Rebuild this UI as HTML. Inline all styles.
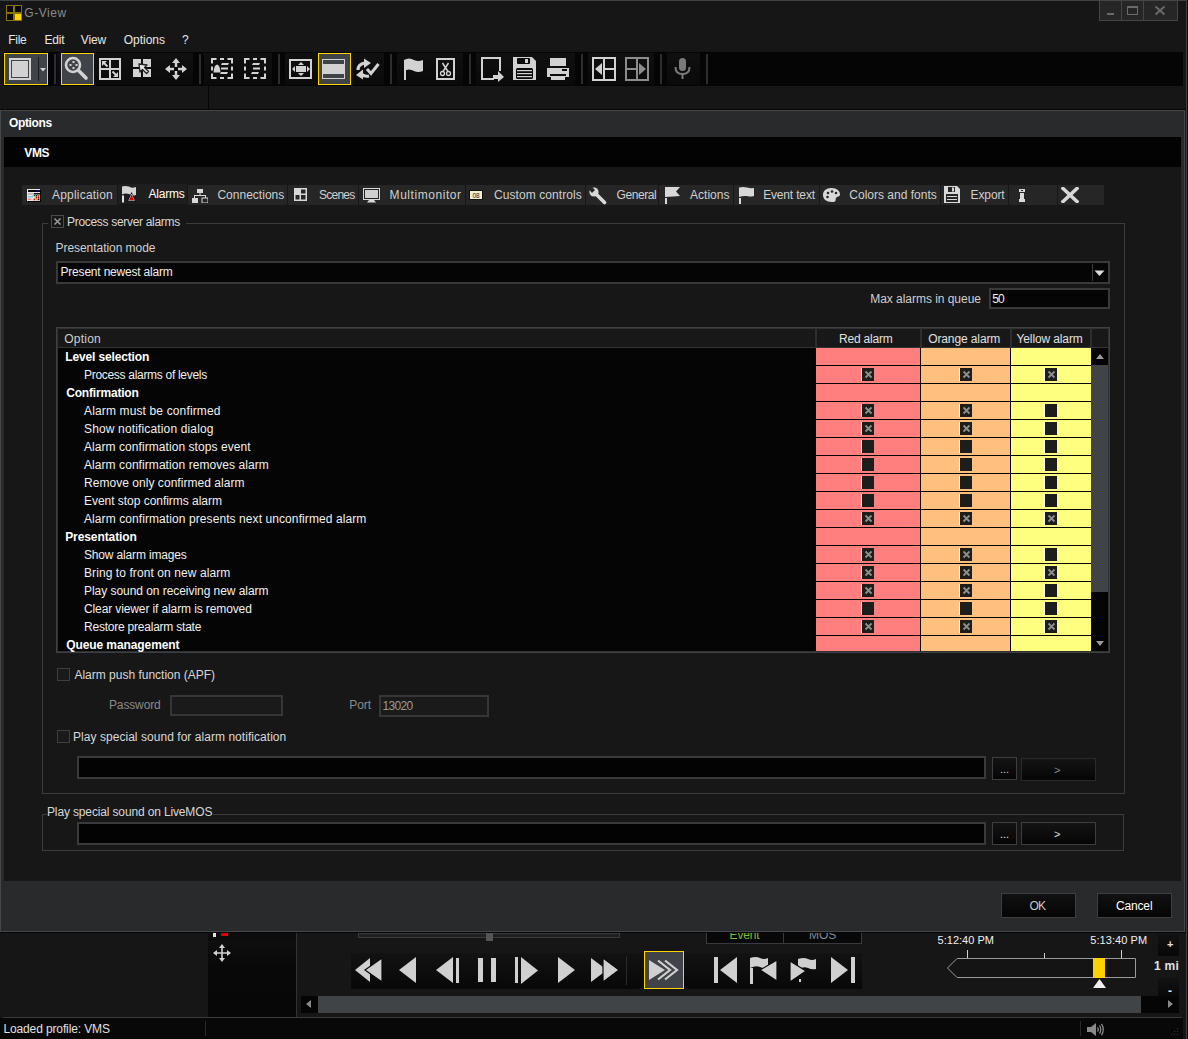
<!DOCTYPE html><html><head><meta charset="utf-8"><style>
html,body{margin:0;padding:0;}
body{width:1188px;height:1039px;background:#161616;position:relative;overflow:hidden;font-family:"Liberation Sans",sans-serif;}
.a{position:absolute;box-sizing:border-box;}
.t{position:absolute;white-space:pre;line-height:14px;font-family:"Liberation Sans",sans-serif;}
</style></head><body>
<div class="a" style="left:0px;top:0px;width:1188px;height:1px;background:#3f4245;"></div>
<div class="a" style="left:1186px;top:0px;width:1px;height:1039px;background:#3a3c3f;"></div>
<div class="a" style="left:1187px;top:0px;width:1px;height:1039px;background:#101010;"></div>
<svg class="a" style="left:6px;top:5px;" width="16" height="16" viewBox="0 0 16 16"><rect x="0" y="0" width="16" height="16" fill="#8a7400"/>
<rect x="1" y="1" width="6" height="6" fill="#050505"/><rect x="9" y="1" width="6" height="6" fill="#050505"/>
<rect x="1" y="9" width="6" height="6" fill="#050505"/><rect x="9" y="9" width="6" height="6" fill="#ffd800"/></svg>
<div id="t0f77378f" class="t" style="left:24.3px;top:6px;font-size:12px;font-weight:400;color:#8a8a8a;letter-spacing:0.560px;">G-View</div>
<div class="a" style="left:1099px;top:0px;width:79px;height:21px;background:#262626;border:1px solid #454545;"></div>
<div class="a" style="left:1121px;top:0px;width:1px;height:21px;background:#454545;"></div>
<div class="a" style="left:1143px;top:0px;width:1px;height:21px;background:#454545;"></div>
<div class="a" style="left:1107px;top:13px;width:7px;height:2px;background:#6a6a6a;"></div>
<div class="a" style="left:1127px;top:6px;width:11px;height:9px;border:1px solid #6a6a6a;border-top-width:2px;"></div>
<svg class="a" style="left:1154px;top:5px;" width="12" height="11" viewBox="0 0 12 11"><path d="M1.5 1.5 L10.5 9.5 M10.5 1.5 L1.5 9.5" stroke="#6a6a6a" stroke-width="2"/></svg>
<div id="t9ccae1ed" class="t" style="left:8.3px;top:33px;font-size:12px;font-weight:400;color:#e6e6e6;letter-spacing:-0.333px;">File</div>
<div id="tb2e7408e" class="t" style="left:44.6px;top:33px;font-size:12px;font-weight:400;color:#e6e6e6;letter-spacing:-0.267px;">Edit</div>
<div id="t12b72c5c" class="t" style="left:80.8px;top:33px;font-size:12px;font-weight:400;color:#e6e6e6;letter-spacing:-0.133px;">View</div>
<div id="tfa9fee2e" class="t" style="left:123.7px;top:33px;font-size:12px;font-weight:400;color:#e6e6e6;letter-spacing:-0.017px;">Options</div>
<div id="td792bb56" class="t" style="left:182px;top:33px;font-size:12px;font-weight:400;color:#e6e6e6;">?</div>
<div class="a" style="left:3px;top:52px;width:1180px;height:34px;background:#050505;"></div>
<div class="a" style="left:4px;top:53px;width:44px;height:32px;background:#404347;border:1px solid #ffd500;"></div>
<div class="a" style="left:9px;top:58px;width:22px;height:22px;border:2px solid #d2d2d2;"></div>
<div class="a" style="left:12px;top:61px;width:16px;height:16px;background:#d2d2d2;"></div>
<div class="a" style="left:38px;top:57px;width:1px;height:24px;background:#1c1e20;"></div>
<svg class="a" style="left:40px;top:68px;" width="6" height="4" viewBox="0 0 6 4"><path d="M0 0 L6 0 L3 3.5 Z" fill="#d2d2d2"/></svg>
<div class="a" style="left:54px;top:54px;width:2px;height:30px;background:#2c2e30;"></div>
<div class="a" style="left:57px;top:53px;width:136px;height:32px;background:linear-gradient(#101010,#0a0a0a);"></div>
<div class="a" style="left:61px;top:53px;width:33px;height:32px;background:#404347;border:1px solid #ffd500;"></div>
<svg class="a" style="left:64px;top:56px;" width="28" height="28" viewBox="0 0 28 28"><circle cx="9" cy="9" r="7" fill="none" stroke="#d2d2d2" stroke-width="2.6"/>
<rect x="8.5" y="5" width="2" height="2" fill="#d2d2d2"/><rect x="8.5" y="11" width="2" height="2" fill="#d2d2d2"/>
<rect x="5.5" y="8" width="2" height="2" fill="#d2d2d2"/><rect x="11.5" y="8" width="2" height="2" fill="#d2d2d2"/>
<path d="M15 15 L22 22" stroke="#d2d2d2" stroke-width="3.6" stroke-linecap="round"/></svg>
<svg class="a" style="left:99px;top:58px;" width="22" height="22" viewBox="0 0 22 22"><rect x="1" y="1" width="20" height="20" fill="none" stroke="#d2d2d2" stroke-width="2"/>
<path d="M11 1 V21 M1 11 H21" stroke="#d2d2d2" stroke-width="2"/>
<path d="M4 4 L8.5 8.5" stroke="#d2d2d2" stroke-width="2"/><path d="M3 3 H8 L3 8 Z" fill="#d2d2d2"/>
<path d="M18 18 L13.5 13.5" stroke="#d2d2d2" stroke-width="2"/><path d="M19 19 H14 L19 14 Z" fill="#d2d2d2"/></svg>
<svg class="a" style="left:133px;top:59px;" width="19" height="19" viewBox="0 0 19 19"><rect x="0" y="0" width="8" height="8" fill="#d2d2d2"/><rect x="10" y="0" width="8" height="8" fill="#d2d2d2"/>
<rect x="0" y="10" width="8" height="8" fill="#d2d2d2"/><rect x="10" y="10" width="8" height="8" fill="#d2d2d2"/>
<path d="M6 5 L14 6 L11.5 8.5 L15.5 12.5 L13.5 14.5 L9.5 10.5 L7 13 Z" fill="#e8e8e8" stroke="#222" stroke-width="1.3" stroke-linejoin="round"/></svg>
<svg class="a" style="left:165px;top:58px;" width="22" height="22" viewBox="0 0 22 22"><path d="M11 2 V20 M2 11 H20" stroke="#d2d2d2" stroke-width="2.5"/>
<path d="M11 0 L15 5 H7 Z M11 22 L15 17 H7 Z M0 11 L5 7 V15 Z M22 11 L17 7 V15 Z" fill="#d2d2d2"/>
<rect x="9" y="9" width="4" height="4" fill="#0a0a0a"/></svg>
<div class="a" style="left:199px;top:54px;width:2px;height:30px;background:#2c2e30;"></div>
<div class="a" style="left:204px;top:53px;width:68px;height:32px;background:linear-gradient(#101010,#0a0a0a);"></div>
<svg class="a" style="left:211px;top:58px;" width="22" height="21" viewBox="0 0 22 21"><path d="M1 5.5 V1 H5.5 M16.5 1 H21 V5.5 M21 15.5 V20 H16.5 M5.5 20 H1 V15.5" fill="none" stroke="#d2d2d2" stroke-width="2"/>
<path d="M9 1 H13 M9 20 H13 M1 8.5 V12.5 M21 8.5 V12.5" stroke="#d2d2d2" stroke-width="2"/></svg>
<svg class="a" style="left:211px;top:58px;" width="22" height="21" viewBox="0 0 22 21"><path d="M2.5 14.5 Q3 7 6 6.5 Q9 7 9.5 14.5 Z" fill="#d2d2d2"/>
<path d="M11 5 H18 L17 7 H10 Z M10 9.5 H17 V11.5 H10 Z M10 14 H17 L16 16 H9 Z" fill="#d2d2d2"/></svg>
<svg class="a" style="left:244px;top:58px;" width="22" height="21" viewBox="0 0 22 21"><path d="M1 5.5 V1 H5.5 M16.5 1 H21 V5.5 M21 15.5 V20 H16.5 M5.5 20 H1 V15.5" fill="none" stroke="#d2d2d2" stroke-width="2"/>
<path d="M9 1 H13 M9 20 H13 M1 8.5 V12.5 M21 8.5 V12.5" stroke="#d2d2d2" stroke-width="2"/></svg>
<svg class="a" style="left:244px;top:58px;" width="22" height="21" viewBox="0 0 22 21"><path d="M9 5 H16 L15 7 H8 Z M9 9.5 H16 V11.5 H9 Z M8 14 H15 L14 16 H7 Z" fill="#d2d2d2"/></svg>
<div class="a" style="left:278px;top:54px;width:2px;height:30px;background:#2c2e30;"></div>
<div class="a" style="left:285px;top:53px;width:99px;height:32px;background:linear-gradient(#101010,#0a0a0a);"></div>
<svg class="a" style="left:289px;top:59px;" width="24" height="20" viewBox="0 0 24 20"><rect x="1" y="1" width="21" height="18" fill="none" stroke="#d2d2d2" stroke-width="2"/>
<rect x="7" y="7" width="10" height="6" fill="#d2d2d2"/>
<path d="M12 3 L15 6 H9 Z M12 17 L15 14 H9 Z M3 10 L6 7 V13 Z M21 10 L18 7 V13 Z" fill="#d2d2d2"/></svg>
<div class="a" style="left:318px;top:53px;width:33px;height:32px;background:#404347;border:1px solid #ffd500;"></div>
<div class="a" style="left:322px;top:59px;width:23px;height:20px;background:#d2d2d2;"></div>
<div class="a" style="left:323px;top:60px;width:21px;height:4px;background:#404347;"></div>
<div class="a" style="left:323px;top:74px;width:21px;height:4px;background:#404347;"></div>
<svg class="a" style="left:354px;top:58px;" width="26" height="22" viewBox="0 0 26 22"><path d="M4 12 Q4 6 11 5" fill="none" stroke="#d2d2d2" stroke-width="3.2"/>
<path d="M10 0.5 L17 5 L10 10 Z" fill="#d2d2d2"/>
<path d="M15 18 Q10 19 7 16" fill="none" stroke="#d2d2d2" stroke-width="3.2"/>
<path d="M9 11.5 L2 17 L9 21.5 Z" fill="#d2d2d2"/>
<path d="M13 11 L17 15.5 L24.5 6" fill="none" stroke="#d2d2d2" stroke-width="3"/></svg>
<div class="a" style="left:390px;top:54px;width:2px;height:30px;background:#2c2e30;"></div>
<div class="a" style="left:397px;top:53px;width:66px;height:32px;background:linear-gradient(#101010,#0a0a0a);"></div>
<svg class="a" style="left:404px;top:58px;" width="19" height="22" viewBox="0 0 19 22"><rect x="0" y="2" width="2" height="20" fill="#d2d2d2"/>
<path d="M0 2 Q5 -1 10 2 Q14 4 19 2 V13 Q14 15 10 13 Q5 10 0 13 Z" fill="#d2d2d2"/></svg>
<svg class="a" style="left:436px;top:58px;" width="19" height="22" viewBox="0 0 19 22"><rect x="1" y="1" width="17" height="20" fill="none" stroke="#d2d2d2" stroke-width="2"/>
<path d="M6.5 5 L12 13.5 M12.5 5 L7 13.5" stroke="#d2d2d2" stroke-width="1.5"/>
<circle cx="6.5" cy="15.5" r="2" fill="none" stroke="#d2d2d2" stroke-width="1.3"/><circle cx="12.5" cy="15.5" r="2" fill="none" stroke="#d2d2d2" stroke-width="1.3"/></svg>
<div class="a" style="left:469px;top:54px;width:2px;height:30px;background:#2c2e30;"></div>
<div class="a" style="left:476px;top:53px;width:99px;height:32px;background:linear-gradient(#101010,#0a0a0a);"></div>
<svg class="a" style="left:481px;top:57px;" width="24" height="25" viewBox="0 0 24 25"><path d="M19 14 V1 H1 V22 H13" fill="none" stroke="#d2d2d2" stroke-width="2"/>
<rect x="12" y="18" width="6" height="4" fill="#d2d2d2"/><path d="M17 14 L23 20 L17 25 Z" fill="#d2d2d2"/></svg>
<svg class="a" style="left:513px;top:57px;" width="23" height="24" viewBox="0 0 23 24"><path d="M0 0 H19 L23 4 V23 H0 Z" fill="#d2d2d2"/>
<rect x="4" y="1" width="13" height="6" rx="1" fill="#0a0a0a"/><rect x="12" y="2" width="3" height="4" fill="#d2d2d2"/>
<rect x="3" y="11" width="17" height="11" rx="1.5" fill="#0a0a0a"/>
<rect x="4" y="13" width="15" height="1.2" fill="#d2d2d2"/><rect x="4" y="16" width="15" height="1.2" fill="#d2d2d2"/><rect x="4" y="19" width="15" height="1.2" fill="#d2d2d2"/></svg>
<svg class="a" style="left:547px;top:57px;" width="23" height="24" viewBox="0 0 23 24"><rect x="3" y="1" width="16" height="8" fill="#d2d2d2"/>
<rect x="0" y="11" width="22" height="9" fill="#d2d2d2"/>
<rect x="15" y="12" width="5" height="2" fill="#0a0a0a"/>
<rect x="3" y="17" width="16" height="2" fill="#0a0a0a"/>
<rect x="4" y="19" width="14" height="4" fill="#d2d2d2"/></svg>
<div class="a" style="left:581px;top:54px;width:2px;height:30px;background:#2c2e30;"></div>
<div class="a" style="left:588px;top:53px;width:66px;height:32px;background:linear-gradient(#101010,#0a0a0a);"></div>
<svg class="a" style="left:592px;top:57px;" width="24" height="24" viewBox="0 0 24 24"><rect x="1" y="1" width="22" height="22" fill="none" stroke="#d2d2d2" stroke-width="2"/>
<path d="M12 1 V23 M12 12 H23" stroke="#d2d2d2" stroke-width="2"/>
<path d="M3 12 L10 6 V18 Z" fill="#d2d2d2"/></svg>
<svg class="a" style="left:625px;top:57px;" width="24" height="24" viewBox="0 0 24 24"><rect x="1" y="1" width="22" height="22" fill="none" stroke="#8c8c8c" stroke-width="2"/>
<path d="M12 1 V23 M1 12 H12" stroke="#8c8c8c" stroke-width="2"/>
<path d="M21 12 L14 6 V18 Z" fill="#8c8c8c"/></svg>
<div class="a" style="left:660px;top:54px;width:2px;height:30px;background:#2c2e30;"></div>
<div class="a" style="left:667px;top:53px;width:33px;height:32px;background:linear-gradient(#101010,#0a0a0a);"></div>
<svg class="a" style="left:674px;top:58px;" width="17" height="21" viewBox="0 0 17 21"><rect x="5" y="0" width="7" height="13" rx="3.5" fill="#7a7a7a"/>
<path d="M1.5 9 Q1.5 16 8.5 16 Q15.5 16 15.5 9" fill="none" stroke="#7a7a7a" stroke-width="2"/>
<rect x="7.5" y="16" width="2" height="5" fill="#7a7a7a"/></svg>
<div class="a" style="left:706px;top:54px;width:2px;height:30px;background:#2c2e30;"></div>
<div class="a" style="left:208px;top:86px;width:1px;height:23px;background:#050505;"></div>
<div class="a" style="left:0px;top:109px;width:1186px;height:1px;background:#060606;"></div>
<div class="a" style="left:208px;top:933px;width:88px;height:84px;background:linear-gradient(#111 0%,#080808 40%,#070707 100%);"></div>
<div class="a" style="left:208px;top:933px;width:88px;height:8px;background:#0c0c0c;"></div>
<div class="a" style="left:213px;top:933px;width:3px;height:4px;background:#e0e0e0;"></div>
<div class="a" style="left:221px;top:933px;width:7px;height:3px;background:#dd0000;"></div>
<svg class="a" style="left:213px;top:944px;" width="18" height="18" viewBox="0 0 18 18"><path d="M9 2 V16 M2 9 H16" stroke="#d0d0d0" stroke-width="1.6"/>
<path d="M9 0 L12 4 H6 Z M9 18 L12 14 H6 Z M0 9 L4 6 V12 Z M18 9 L14 6 V12 Z" fill="#d0d0d0"/></svg>
<div class="a" style="left:296px;top:933px;width:1px;height:84px;background:#333333;"></div>
<div class="a" style="left:358px;top:933px;width:262px;height:5px;border:1px solid #3a3a3a;background:#202020;"></div>
<div class="a" style="left:486px;top:931px;width:7px;height:10px;background:#555555;"></div>
<div class="a" style="left:351px;top:953px;width:511px;height:36px;background:linear-gradient(#121212,#080808);"></div>
<svg class="a" style="left:354px;top:957px;" width="30" height="27" viewBox="0 0 30 27"><path d="M1 13 L16 1 V25 Z" fill="#d0d0d0"/><path d="M11 13 L28 1 V25 Z" fill="#d0d0d0" stroke="#0a0a0a" stroke-width="1.2"/></svg>
<svg class="a" style="left:399px;top:957px;" width="17" height="26" viewBox="0 0 17 26"><path d="M0 13 L17 0 V26 Z" fill="#d0d0d0"/></svg>
<svg class="a" style="left:436px;top:957px;" width="24" height="26" viewBox="0 0 24 26"><path d="M0 13 L17 0 V26 Z" fill="#d0d0d0"/><rect x="20" y="1" width="3" height="25" fill="#d0d0d0"/></svg>
<svg class="a" style="left:478px;top:958px;" width="19" height="24" viewBox="0 0 19 24"><rect x="0" y="0" width="5" height="24" fill="#d0d0d0"/><rect x="13" y="0" width="5" height="24" fill="#d0d0d0"/></svg>
<svg class="a" style="left:515px;top:957px;" width="24" height="27" viewBox="0 0 24 27"><rect x="0" y="0" width="3" height="26" fill="#d0d0d0"/><path d="M23 13.5 L6 0 V27 Z" fill="#d0d0d0"/></svg>
<svg class="a" style="left:558px;top:957px;" width="18" height="26" viewBox="0 0 18 26"><path d="M17 13 L0 0 V26 Z" fill="#d0d0d0"/></svg>
<svg class="a" style="left:590px;top:957px;" width="30" height="27" viewBox="0 0 30 27"><path d="M1 1 V25 L17 13 Z" fill="#d0d0d0"/><path d="M13 1 V25 L29 13 Z" fill="#d0d0d0" stroke="#0a0a0a" stroke-width="1.2"/></svg>
<div class="a" style="left:626px;top:956px;width:1px;height:29px;background:#2a2a2a;"></div>
<div class="a" style="left:644px;top:951px;width:40px;height:38px;background:#404347;border:1px solid #ffd500;"></div>
<svg class="a" style="left:648px;top:959px;" width="33" height="22" viewBox="0 0 33 22"><path d="M1 1 L17 11 L1 21 Z" fill="#d0d0d0"/>
<path d="M10 1.5 L22 11 L10 20.5" fill="none" stroke="#d0d0d0" stroke-width="2.2"/>
<path d="M17 1.5 L29 11 L17 20.5" fill="none" stroke="#d0d0d0" stroke-width="2.2"/></svg>
<div class="a" style="left:706px;top:925px;width:78px;height:19px;background:#080808;border:1px solid #3a3a3a;border-top:none;"></div>
<div class="a" style="left:783px;top:925px;width:79px;height:19px;background:#080808;border:1px solid #3a3a3a;border-top:none;"></div>
<div id="t23795a25" class="t" style="left:729.5px;top:928px;font-size:12px;font-weight:400;color:#7bbd2e;letter-spacing:-0.125px;">Event</div>
<div id="t63a835b7" class="t" style="left:809px;top:928px;font-size:12px;font-weight:400;color:#7f8a99;font-size:12px;">MOS</div>
<svg class="a" style="left:713px;top:957px;" width="25" height="27" viewBox="0 0 25 27"><rect x="1" y="0" width="4" height="26" fill="#d0d0d0"/><path d="M7 13 L24 0 V26 Z" fill="#d0d0d0"/></svg>
<svg class="a" style="left:749px;top:957px;" width="29" height="28" viewBox="0 0 29 28"><rect x="1" y="11" width="3" height="16" fill="#d0d0d0"/><path d="M1 1 Q7 -1 11 1 Q15 3 19 1 V11 Q15 12 11 10 Q7 8 1 11 Z" fill="#d0d0d0"/><path d="M11 13 L28 3 V24 Z" fill="#d0d0d0" stroke="#0a0a0a" stroke-width="1.2"/></svg>
<svg class="a" style="left:789px;top:957px;" width="29" height="28" viewBox="0 0 29 28"><path d="M1 1 Q7 -1 11 1 Q15 3 19 1 V11 Q15 12 11 10 Q7 8 1 11 Z" fill="#d0d0d0" transform="translate(8,1)"/><path d="M1 4 L17 14 L1 25 Z" fill="#d0d0d0" stroke="#0a0a0a" stroke-width="1.2"/><rect x="10" y="22" width="2" height="3" fill="#d0d0d0"/></svg>
<svg class="a" style="left:830px;top:957px;" width="25" height="27" viewBox="0 0 25 27"><path d="M1 0 L18 13 L1 26 Z" fill="#d0d0d0"/><rect x="21" y="0" width="4" height="26" fill="#d0d0d0"/></svg>
<div id="tb10a1912" class="t" style="left:937.6px;top:933px;font-size:12px;font-weight:400;color:#f0f0f0;font-size:11px;letter-spacing:0.012px;">5:12:40 PM</div>
<div id="ta8833228" class="t" style="left:1090.3px;top:933px;font-size:12px;font-weight:400;color:#f0f0f0;font-size:11px;letter-spacing:0.056px;">5:13:40 PM</div>
<div class="a" style="left:967px;top:950px;width:1px;height:8px;background:#d0d0d0;"></div>
<div class="a" style="left:1044px;top:953px;width:1px;height:5px;background:#d0d0d0;"></div>
<div class="a" style="left:1121px;top:950px;width:1px;height:8px;background:#d0d0d0;"></div>
<svg class="a" style="left:946px;top:957px;" width="191" height="22" viewBox="0 0 191 22"><path d="M11 1.5 H189.5 V20.5 H11 L1.5 11 Z" fill="#141414" stroke="#9a9a9a" stroke-width="1"/></svg>
<div class="a" style="left:1093px;top:958px;width:12px;height:20px;background:#ffd200;"></div>
<svg class="a" style="left:1093px;top:979px;" width="13" height="9" viewBox="0 0 13 9"><path d="M0 9 L6.5 0 L13 9 Z" fill="#f0f0f0"/></svg>
<div class="a" style="left:1158px;top:934px;width:21px;height:22px;background:linear-gradient(#121212,#080808);"></div>
<div id="t08a63300" class="t" style="left:1167px;top:937px;font-size:12px;font-weight:400;color:#e0e0e0;font-size:11px;font-weight:700">+</div>
<div class="a" style="left:1150px;top:959px;width:29px;height:16px;overflow:hidden"><div class="t" style="left:4px;top:0px;font-size:12px;font-weight:700;color:#e0e0e0;letter-spacing:0.3px">1 min</div></div>
<div class="a" style="left:1158px;top:978px;width:21px;height:18px;background:linear-gradient(#121212,#080808);"></div>
<div id="tc3e9525c" class="t" style="left:1168px;top:984px;font-size:12px;font-weight:400;color:#e0e0e0;font-weight:700">-</div>
<div class="a" style="left:301px;top:996px;width:878px;height:17px;background:#050505;"></div>
<div class="a" style="left:318px;top:996px;width:823px;height:17px;background:#404447;"></div>
<svg class="a" style="left:306px;top:1000px;" width="5" height="8" viewBox="0 0 5 8"><path d="M5 0 L0 4 L5 8 Z" fill="#8a8a8a"/></svg>
<svg class="a" style="left:1168px;top:1000px;" width="5" height="8" viewBox="0 0 5 8"><path d="M0 0 L5 4 L0 8 Z" fill="#8a8a8a"/></svg>
<div class="a" style="left:3px;top:1017px;width:1179px;height:1px;background:#3a3a3a;"></div>
<div class="a" style="left:0px;top:1018px;width:1183px;height:21px;background:#080808;"></div>
<div id="tf0260ee5" class="t" style="left:3.4000000000000004px;top:1022px;font-size:12px;font-weight:400;color:#e0e0e0;letter-spacing:-0.122px;">Loaded profile: VMS</div>
<div class="a" style="left:205px;top:1021px;width:1px;height:15px;background:#2a2a2a;"></div>
<div class="a" style="left:1080px;top:1021px;width:1px;height:15px;background:#2a2a2a;"></div>
<svg class="a" style="left:1087px;top:1023px;" width="17" height="13" viewBox="0 0 17 13"><path d="M0 4 H4 L9 0 V13 L4 9 H0 Z" fill="#8a8a8a"/>
<path d="M10.5 4.5 Q12 6.5 10.5 8.5 M12.5 2.5 Q15 6.5 12.5 10.5 M14.5 0.8 Q18 6.5 14.5 12.2" fill="none" stroke="#8a8a8a" stroke-width="1.3"/></svg>
<div class="a" style="left:1177px;top:1028px;width:1px;height:1px;background:#3a3a3a;"></div>
<div class="a" style="left:1174px;top:1031px;width:1px;height:1px;background:#3a3a3a;"></div>
<div class="a" style="left:1177px;top:1031px;width:1px;height:1px;background:#3a3a3a;"></div>
<div class="a" style="left:1171px;top:1034px;width:1px;height:1px;background:#3a3a3a;"></div>
<div class="a" style="left:1174px;top:1034px;width:1px;height:1px;background:#3a3a3a;"></div>
<div class="a" style="left:1177px;top:1034px;width:1px;height:1px;background:#3a3a3a;"></div>
<div class="a" style="left:0px;top:110px;width:1185px;height:822px;background:#292a2c;border:1px solid #45484b;"></div>
<div id="t2e519f17" class="t" style="left:9.1px;top:116px;font-size:12px;font-weight:700;color:#ffffff;letter-spacing:-0.384px;">Options</div>
<div class="a" style="left:4px;top:137px;width:1177px;height:30px;background:#030303;"></div>
<div id="t68e1c9e2" class="t" style="left:24.2px;top:146px;font-size:12px;font-weight:700;color:#ffffff;letter-spacing:-0.300px;">VMS</div>
<div class="a" style="left:4px;top:167px;width:1177px;height:714px;background:#171717;"></div>
<div class="a" style="left:0px;top:932px;width:1186px;height:1px;background:#050505;"></div>
<div class="a" style="left:22px;top:185px;width:95px;height:20px;background:#262626;"></div>
<div id="te715fb7c" class="t" style="left:52px;top:188px;font-size:12px;font-weight:400;color:#cfcfcf;letter-spacing:0.200px;">Application</div>
<div class="a" style="left:118px;top:184px;width:69px;height:20px;background:#1e1e1e;"></div>
<div id="t6bcb87f9" class="t" style="left:148.6px;top:187px;font-size:12px;font-weight:400;color:#ffffff;letter-spacing:-0.240px;">Alarms</div>
<div class="a" style="left:188px;top:185px;width:99px;height:20px;background:#262626;"></div>
<div id="t0d396789" class="t" style="left:217.4px;top:188px;font-size:12px;font-weight:400;color:#cfcfcf;letter-spacing:0.020px;">Connections</div>
<div class="a" style="left:288px;top:185px;width:70px;height:20px;background:#262626;"></div>
<div id="ta64e43b4" class="t" style="left:318.9px;top:188px;font-size:12px;font-weight:400;color:#cfcfcf;letter-spacing:-0.720px;">Scenes</div>
<div class="a" style="left:359px;top:185px;width:106px;height:20px;background:#262626;"></div>
<div id="td576d865" class="t" style="left:389.6px;top:188px;font-size:12px;font-weight:400;color:#cfcfcf;letter-spacing:0.555px;">Multimonitor</div>
<div class="a" style="left:466px;top:185px;width:119px;height:20px;background:#262626;"></div>
<div id="td60ac236" class="t" style="left:494px;top:188px;font-size:12px;font-weight:400;color:#cfcfcf;letter-spacing:0.079px;">Custom controls</div>
<div class="a" style="left:586px;top:185px;width:72px;height:20px;background:#262626;"></div>
<div id="t1f73ac9b" class="t" style="left:616.6px;top:188px;font-size:12px;font-weight:400;color:#cfcfcf;letter-spacing:-0.449px;">General</div>
<div class="a" style="left:659px;top:185px;width:74px;height:20px;background:#262626;"></div>
<div id="tc307d596" class="t" style="left:690px;top:188px;font-size:12px;font-weight:400;color:#cfcfcf;letter-spacing:0.017px;">Actions</div>
<div class="a" style="left:734px;top:185px;width:85px;height:20px;background:#262626;"></div>
<div id="t58368039" class="t" style="left:763.2px;top:188px;font-size:12px;font-weight:400;color:#cfcfcf;letter-spacing:-0.167px;">Event text</div>
<div class="a" style="left:820px;top:185px;width:120px;height:20px;background:#262626;"></div>
<div id="tf576cc19" class="t" style="left:849.3px;top:188px;font-size:12px;font-weight:400;color:#cfcfcf;letter-spacing:0.007px;">Colors and fonts</div>
<div class="a" style="left:941px;top:185px;width:67px;height:20px;background:#262626;"></div>
<div id="tf8ffec64" class="t" style="left:970.5px;top:188px;font-size:12px;font-weight:400;color:#cfcfcf;letter-spacing:-0.100px;">Export</div>
<div class="a" style="left:1009px;top:185px;width:48px;height:20px;background:#262626;"></div>
<div class="a" style="left:1058px;top:185px;width:46px;height:20px;background:#262626;"></div>
<svg class="a" style="left:27px;top:189px;" width="15" height="14" viewBox="0 0 15 14"><rect x="1" y="1" width="13" height="12" fill="#000"/><rect x="0" y="0" width="13" height="12" fill="#e6e6e6"/>
<rect x="1" y="1" width="12" height="2" fill="#04040c"/><rect x="9" y="1" width="2" height="1" fill="#1010a0"/><rect x="11.5" y="1" width="1.5" height="1" fill="#1010a0"/>
<rect x="1" y="4" width="6" height="2" fill="#bdbdbd"/><rect x="7" y="4" width="6" height="1.5" fill="#111"/>
<rect x="1" y="7" width="5" height="1.6" fill="#7fd0ee"/><rect x="1" y="9.5" width="3" height="1.5" fill="#ff8080"/>
<circle cx="7.4" cy="6.6" r="0.9" fill="#063"/><circle cx="9.5" cy="6.6" r="0.9" fill="#301010"/><circle cx="11.6" cy="6.6" r="0.9" fill="#f02010"/>
<circle cx="7.4" cy="8.5" r="0.9" fill="#f0e060"/><circle cx="9.5" cy="8.5" r="0.9" fill="#b00010"/><circle cx="11.6" cy="8.5" r="0.9" fill="#900010"/>
<circle cx="7.4" cy="10.4" r="0.9" fill="#c01020"/><circle cx="9.5" cy="10.4" r="0.9" fill="#f09000"/><circle cx="11.6" cy="10.4" r="0.9" fill="#000"/></svg>
<svg class="a" style="left:122px;top:186px;" width="15" height="17" viewBox="0 0 15 17"><path d="M0 0.5 Q3 -0.5 7 0.5 L9 1.5 Q11 2 14 1 V9 Q11 10 9 9 L7 8 Q3 7 0 8.5 Z" fill="#d4d4d4"/>
<rect x="0" y="9.5" width="2" height="7" fill="#e0e0e0"/>
<path d="M9.6 6 L14 15.5 H5.2 Z" fill="#050505"/><path d="M9.6 8 L12.6 14.6 H6.6 Z" fill="#dd0000" stroke="#bfe8e8" stroke-width="0.6"/></svg>
<svg class="a" style="left:192px;top:189px;" width="16" height="14" viewBox="0 0 16 14"><rect x="5" y="0" width="6" height="4" fill="#d8d8d8"/><rect x="7.5" y="4" width="1" height="3" fill="#d8d8d8"/>
<rect x="2" y="6" width="12" height="1" fill="#d8d8d8"/><rect x="2" y="6" width="1" height="3" fill="#d8d8d8"/><rect x="13" y="6" width="1" height="3" fill="#d8d8d8"/>
<rect x="0" y="9" width="6" height="5" fill="#d8d8d8"/><rect x="10" y="9" width="6" height="5" fill="none" stroke="#d8d8d8" stroke-width="1"/></svg>
<svg class="a" style="left:294px;top:188px;" width="13" height="13" viewBox="0 0 13 13"><rect x="0" y="0" width="13" height="13" fill="#d8d8d8"/><rect x="1.5" y="7" width="4" height="4.5" fill="#262626"/><rect x="7" y="1.5" width="4.5" height="4" fill="#262626"/><rect x="7" y="7" width="4.5" height="4.5" fill="#262626"/></svg>
<svg class="a" style="left:363px;top:188px;" width="17" height="15" viewBox="0 0 17 15"><rect x="0" y="0" width="17" height="12" fill="#d8d8d8"/><rect x="1" y="1" width="15" height="10" fill="#222"/><rect x="2" y="2" width="13" height="8" fill="#d0d0d0"/>
<path d="M6 12 H11 L13 14.5 H4 Z" fill="#d8d8d8"/></svg>
<svg class="a" style="left:469px;top:190px;" width="14" height="10" viewBox="0 0 14 10"><rect x="0" y="0" width="14" height="10" fill="#111"/><rect x="1" y="1" width="12" height="8" fill="#f2eed0"/><text x="7" y="7.6" font-size="6.5" font-family="Liberation Sans" text-anchor="middle" fill="#222">08</text></svg>
<svg class="a" style="left:589px;top:187px;" width="18" height="18" viewBox="0 0 18 18"><path d="M6 6 L15.5 15.5" stroke="#d8d8d8" stroke-width="3.6" stroke-linecap="round"/>
<circle cx="5" cy="5" r="4.6" fill="#d8d8d8"/><path d="M0 2.5 L3 0 L6 3 L3 6 Z" fill="#262626"/></svg>
<svg class="a" style="left:665px;top:187px;" width="16" height="17" viewBox="0 0 16 17"><rect x="0" y="11" width="2" height="6" fill="#d8d8d8"/>
<path d="M0 0 L8 0 L15 0 L11 4.5 L15 9 L8 9.5 L0 10 Z" fill="#d8d8d8"/></svg>
<svg class="a" style="left:739px;top:187px;" width="16" height="17" viewBox="0 0 16 17"><rect x="0" y="11" width="2" height="6" fill="#d8d8d8"/>
<path d="M0 0.5 Q4 -0.5 8 0.5 Q11 1.5 15 1 V9 Q11 10 8 9 Q4 8.5 0 10 Z" fill="#d8d8d8"/></svg>
<svg class="a" style="left:823px;top:188px;" width="17" height="14" viewBox="0 0 17 14"><path d="M8.5 0 C14 0 17 3 17 6.5 C17 9 14 8 13 10 C12 12 14 14 9 14 C3 14 0 11 0 7 C0 3 3 0 8.5 0 Z" fill="#d8d8d8"/>
<circle cx="5" cy="5" r="1.3" fill="#262626"/><circle cx="9" cy="3.5" r="1.3" fill="#262626"/><circle cx="13" cy="5" r="1.3" fill="#262626"/><circle cx="4.5" cy="9" r="1.3" fill="#262626"/></svg>
<svg class="a" style="left:944px;top:186px;" width="16" height="17" viewBox="0 0 16 17"><path d="M0 0 H13 L16 3 V17 H0 Z" fill="#d8d8d8"/><rect x="4" y="1" width="7" height="5" fill="#262626"/><rect x="8" y="1.5" width="2" height="4" fill="#d8d8d8"/>
<rect x="2" y="8" width="12" height="8" fill="#262626"/><rect x="3" y="10" width="10" height="1" fill="#d8d8d8"/><rect x="3" y="13" width="10" height="1" fill="#d8d8d8"/></svg>
<svg class="a" style="left:1019px;top:189px;" width="6" height="13" viewBox="0 0 6 13"><rect x="0" y="0" width="6" height="3" fill="#d8d8d8"/><rect x="2" y="1" width="2" height="1" fill="#262626"/><rect x="1" y="4" width="4" height="6" fill="#d8d8d8"/><rect x="0" y="10" width="6" height="3" fill="#d8d8d8"/></svg>
<svg class="a" style="left:1061px;top:187px;" width="18" height="16" viewBox="0 0 18 16"><path d="M2 1.5 L16 14.5 M16 1.5 L2 14.5" stroke="#d8d8d8" stroke-width="3.6" stroke-linecap="square"/></svg>
<div class="a" style="left:42px;top:223px;width:6px;height:1px;background:#3c3c3c;"></div>
<div class="a" style="left:186px;top:223px;width:939px;height:1px;background:#3c3c3c;"></div>
<div class="a" style="left:42px;top:223px;width:1px;height:571px;background:#3c3c3c;"></div>
<div class="a" style="left:1124px;top:223px;width:1px;height:571px;background:#3c3c3c;"></div>
<div class="a" style="left:42px;top:793px;width:1083px;height:1px;background:#3c3c3c;"></div>
<div class="a" style="left:51px;top:215px;width:13px;height:13px;background:#171717;border:1px solid #4a4a4a;"></div>
<svg class="a" style="left:53px;top:217px;" width="9" height="9" viewBox="0 0 9 9"><path d="M1.5 1.5 L7.5 7.5 M7.5 1.5 L1.5 7.5" stroke="#9a9a9a" stroke-width="1.5"/></svg>
<div id="t0e9824f6" class="t" style="left:67px;top:215px;font-size:12px;font-weight:400;color:#d8d8d8;letter-spacing:-0.310px;">Process server alarms</div>
<div id="t4fa791bb" class="t" style="left:55.5px;top:241px;font-size:12px;font-weight:400;color:#cfcfcf;letter-spacing:-0.049px;">Presentation mode</div>
<div class="a" style="left:56px;top:261px;width:1054px;height:23px;background:#050505;border:2px solid #3a3a3a;"></div>
<div class="a" style="left:1092px;top:264px;width:1px;height:17px;background:#3a3a3a;"></div>
<svg class="a" style="left:1094px;top:270px;" width="11" height="7" viewBox="0 0 11 7"><path d="M0.5 0.5 H10.5 L5.5 6 Z" fill="#dcdcdc"/></svg>
<div id="t3273ff8e" class="t" style="left:60.5px;top:265px;font-size:12px;font-weight:400;color:#f0f0f0;letter-spacing:-0.195px;">Present newest alarm</div>
<div id="t49c53346" class="t" style="left:870.2px;top:292px;font-size:12px;font-weight:400;color:#cfcfcf;letter-spacing:-0.034px;">Max alarms in queue</div>
<div class="a" style="left:989px;top:288px;width:121px;height:21px;background:#050505;border:2px solid #3a3a3a;"></div>
<div id="t53976f1d" class="t" style="left:992.3px;top:292px;font-size:12px;font-weight:400;color:#f0f0f0;letter-spacing:-1.000px;">50</div>
<div class="a" style="left:56px;top:327px;width:1054px;height:326px;background:#050505;border:2px solid #2f3133;"></div>
<div class="a" style="left:56px;top:327px;width:1054px;height:326px;border:1px solid #3e4144;"></div>
<div class="a" style="left:58px;top:329px;width:1050px;height:18px;background:#181818;"></div>
<div class="a" style="left:58px;top:347px;width:1050px;height:1px;background:#333333;"></div>
<div class="a" style="left:815px;top:329px;width:2px;height:18px;background:#2e2e2e;"></div>
<div class="a" style="left:920px;top:329px;width:2px;height:18px;background:#2e2e2e;"></div>
<div class="a" style="left:1010px;top:329px;width:2px;height:18px;background:#2e2e2e;"></div>
<div class="a" style="left:1090px;top:329px;width:2px;height:18px;background:#2e2e2e;"></div>
<div id="tf9bc1824" class="t" style="left:64.2px;top:332px;font-size:12px;font-weight:400;color:#cfcfcf;letter-spacing:0.240px;">Option</div>
<div id="t2404eac0" class="t" style="left:839.1px;top:332px;font-size:12px;font-weight:400;color:#e0e0e0;letter-spacing:-0.225px;">Red alarm</div>
<div id="tdc899ca7" class="t" style="left:928.2px;top:332px;font-size:12px;font-weight:400;color:#e0e0e0;letter-spacing:-0.108px;">Orange alarm</div>
<div id="t10c94888" class="t" style="left:1016.5px;top:332px;font-size:12px;font-weight:400;color:#e0e0e0;letter-spacing:-0.118px;">Yellow alarm</div>
<div class="a" style="left:816px;top:348px;width:104px;height:303px;background:#ff7f7f;"></div>
<div class="a" style="left:921px;top:348px;width:89px;height:303px;background:#ffbf7f;"></div>
<div class="a" style="left:1011px;top:348px;width:80px;height:303px;background:#ffff7f;"></div>
<div class="a" style="left:816px;top:365px;width:275px;height:1px;background:#050505;"></div>
<div id="t84edcffa" class="t" style="left:65.2px;top:350px;font-size:12px;font-weight:700;color:#ffffff;letter-spacing:-0.135px;">Level selection</div>
<div class="a" style="left:816px;top:383px;width:275px;height:1px;background:#050505;"></div>
<div id="ta5688473" class="t" style="left:84px;top:368px;font-size:12px;font-weight:400;color:#f0f0f0;letter-spacing:-0.300px;">Process alarms of levels</div>
<div class="a" style="left:861px;top:368px;width:1px;height:13px;background:#ffffff;"></div>
<div class="a" style="left:862px;top:368px;width:12px;height:13px;background:#1c1e1e;"></div>
<svg class="a" style="left:864px;top:370px;" width="9" height="9" viewBox="0 0 9 9"><path d="M1.5 1.5 L7.5 7.5 M7.5 1.5 L1.5 7.5" stroke="#8e8e8e" stroke-width="1.8"/></svg>
<div class="a" style="left:959px;top:368px;width:1px;height:13px;background:#ffffff;"></div>
<div class="a" style="left:960px;top:368px;width:12px;height:13px;background:#1c1e1e;"></div>
<svg class="a" style="left:962px;top:370px;" width="9" height="9" viewBox="0 0 9 9"><path d="M1.5 1.5 L7.5 7.5 M7.5 1.5 L1.5 7.5" stroke="#8e8e8e" stroke-width="1.8"/></svg>
<div class="a" style="left:1044px;top:368px;width:1px;height:13px;background:#ffffff;"></div>
<div class="a" style="left:1045px;top:368px;width:12px;height:13px;background:#1c1e1e;"></div>
<svg class="a" style="left:1047px;top:370px;" width="9" height="9" viewBox="0 0 9 9"><path d="M1.5 1.5 L7.5 7.5 M7.5 1.5 L1.5 7.5" stroke="#8e8e8e" stroke-width="1.8"/></svg>
<div class="a" style="left:816px;top:401px;width:275px;height:1px;background:#050505;"></div>
<div id="t9dacc42d" class="t" style="left:66.2px;top:386px;font-size:12px;font-weight:700;color:#ffffff;letter-spacing:-0.182px;">Confirmation</div>
<div class="a" style="left:816px;top:419px;width:275px;height:1px;background:#050505;"></div>
<div id="tffc1053f" class="t" style="left:84px;top:404px;font-size:12px;font-weight:400;color:#f0f0f0;letter-spacing:0.141px;">Alarm must be confirmed</div>
<div class="a" style="left:861px;top:404px;width:1px;height:13px;background:#ffffff;"></div>
<div class="a" style="left:862px;top:404px;width:12px;height:13px;background:#1c1e1e;"></div>
<svg class="a" style="left:864px;top:406px;" width="9" height="9" viewBox="0 0 9 9"><path d="M1.5 1.5 L7.5 7.5 M7.5 1.5 L1.5 7.5" stroke="#8e8e8e" stroke-width="1.8"/></svg>
<div class="a" style="left:959px;top:404px;width:1px;height:13px;background:#ffffff;"></div>
<div class="a" style="left:960px;top:404px;width:12px;height:13px;background:#1c1e1e;"></div>
<svg class="a" style="left:962px;top:406px;" width="9" height="9" viewBox="0 0 9 9"><path d="M1.5 1.5 L7.5 7.5 M7.5 1.5 L1.5 7.5" stroke="#8e8e8e" stroke-width="1.8"/></svg>
<div class="a" style="left:1044px;top:404px;width:1px;height:13px;background:#ffffff;"></div>
<div class="a" style="left:1045px;top:404px;width:12px;height:13px;background:#1c1e1e;"></div>
<div class="a" style="left:816px;top:437px;width:275px;height:1px;background:#050505;"></div>
<div id="t37f5b1d3" class="t" style="left:84px;top:422px;font-size:12px;font-weight:400;color:#f0f0f0;letter-spacing:0.148px;">Show notification dialog</div>
<div class="a" style="left:861px;top:422px;width:1px;height:13px;background:#ffffff;"></div>
<div class="a" style="left:862px;top:422px;width:12px;height:13px;background:#1c1e1e;"></div>
<svg class="a" style="left:864px;top:424px;" width="9" height="9" viewBox="0 0 9 9"><path d="M1.5 1.5 L7.5 7.5 M7.5 1.5 L1.5 7.5" stroke="#8e8e8e" stroke-width="1.8"/></svg>
<div class="a" style="left:959px;top:422px;width:1px;height:13px;background:#ffffff;"></div>
<div class="a" style="left:960px;top:422px;width:12px;height:13px;background:#1c1e1e;"></div>
<svg class="a" style="left:962px;top:424px;" width="9" height="9" viewBox="0 0 9 9"><path d="M1.5 1.5 L7.5 7.5 M7.5 1.5 L1.5 7.5" stroke="#8e8e8e" stroke-width="1.8"/></svg>
<div class="a" style="left:1044px;top:422px;width:1px;height:13px;background:#ffffff;"></div>
<div class="a" style="left:1045px;top:422px;width:12px;height:13px;background:#1c1e1e;"></div>
<div class="a" style="left:816px;top:455px;width:275px;height:1px;background:#050505;"></div>
<div id="t1f917887" class="t" style="left:84px;top:440px;font-size:12px;font-weight:400;color:#f0f0f0;letter-spacing:0.062px;">Alarm confirmation stops event</div>
<div class="a" style="left:861px;top:440px;width:1px;height:13px;background:#ffffff;"></div>
<div class="a" style="left:862px;top:440px;width:12px;height:13px;background:#1c1e1e;"></div>
<div class="a" style="left:959px;top:440px;width:1px;height:13px;background:#ffffff;"></div>
<div class="a" style="left:960px;top:440px;width:12px;height:13px;background:#1c1e1e;"></div>
<div class="a" style="left:1044px;top:440px;width:1px;height:13px;background:#ffffff;"></div>
<div class="a" style="left:1045px;top:440px;width:12px;height:13px;background:#1c1e1e;"></div>
<div class="a" style="left:816px;top:473px;width:275px;height:1px;background:#050505;"></div>
<div id="tabfe888e" class="t" style="left:84px;top:458px;font-size:12px;font-weight:400;color:#f0f0f0;letter-spacing:0.067px;">Alarm confirmation removes alarm</div>
<div class="a" style="left:861px;top:458px;width:1px;height:13px;background:#ffffff;"></div>
<div class="a" style="left:862px;top:458px;width:12px;height:13px;background:#1c1e1e;"></div>
<div class="a" style="left:959px;top:458px;width:1px;height:13px;background:#ffffff;"></div>
<div class="a" style="left:960px;top:458px;width:12px;height:13px;background:#1c1e1e;"></div>
<div class="a" style="left:1044px;top:458px;width:1px;height:13px;background:#ffffff;"></div>
<div class="a" style="left:1045px;top:458px;width:12px;height:13px;background:#1c1e1e;"></div>
<div class="a" style="left:816px;top:491px;width:275px;height:1px;background:#050505;"></div>
<div id="t5c06f1e1" class="t" style="left:84px;top:476px;font-size:12px;font-weight:400;color:#f0f0f0;letter-spacing:0.042px;">Remove only confirmed alarm</div>
<div class="a" style="left:861px;top:476px;width:1px;height:13px;background:#ffffff;"></div>
<div class="a" style="left:862px;top:476px;width:12px;height:13px;background:#1c1e1e;"></div>
<div class="a" style="left:959px;top:476px;width:1px;height:13px;background:#ffffff;"></div>
<div class="a" style="left:960px;top:476px;width:12px;height:13px;background:#1c1e1e;"></div>
<div class="a" style="left:1044px;top:476px;width:1px;height:13px;background:#ffffff;"></div>
<div class="a" style="left:1045px;top:476px;width:12px;height:13px;background:#1c1e1e;"></div>
<div class="a" style="left:816px;top:509px;width:275px;height:1px;background:#050505;"></div>
<div id="t7dab889e" class="t" style="left:84px;top:494px;font-size:12px;font-weight:400;color:#f0f0f0;letter-spacing:-0.033px;">Event stop confirms alarm</div>
<div class="a" style="left:861px;top:494px;width:1px;height:13px;background:#ffffff;"></div>
<div class="a" style="left:862px;top:494px;width:12px;height:13px;background:#1c1e1e;"></div>
<div class="a" style="left:959px;top:494px;width:1px;height:13px;background:#ffffff;"></div>
<div class="a" style="left:960px;top:494px;width:12px;height:13px;background:#1c1e1e;"></div>
<div class="a" style="left:1044px;top:494px;width:1px;height:13px;background:#ffffff;"></div>
<div class="a" style="left:1045px;top:494px;width:12px;height:13px;background:#1c1e1e;"></div>
<div class="a" style="left:816px;top:527px;width:275px;height:1px;background:#050505;"></div>
<div id="td16957db" class="t" style="left:84px;top:512px;font-size:12px;font-weight:400;color:#f0f0f0;letter-spacing:0.084px;">Alarm confirmation presents next unconfirmed alarm</div>
<div class="a" style="left:861px;top:512px;width:1px;height:13px;background:#ffffff;"></div>
<div class="a" style="left:862px;top:512px;width:12px;height:13px;background:#1c1e1e;"></div>
<svg class="a" style="left:864px;top:514px;" width="9" height="9" viewBox="0 0 9 9"><path d="M1.5 1.5 L7.5 7.5 M7.5 1.5 L1.5 7.5" stroke="#8e8e8e" stroke-width="1.8"/></svg>
<div class="a" style="left:959px;top:512px;width:1px;height:13px;background:#ffffff;"></div>
<div class="a" style="left:960px;top:512px;width:12px;height:13px;background:#1c1e1e;"></div>
<svg class="a" style="left:962px;top:514px;" width="9" height="9" viewBox="0 0 9 9"><path d="M1.5 1.5 L7.5 7.5 M7.5 1.5 L1.5 7.5" stroke="#8e8e8e" stroke-width="1.8"/></svg>
<div class="a" style="left:1044px;top:512px;width:1px;height:13px;background:#ffffff;"></div>
<div class="a" style="left:1045px;top:512px;width:12px;height:13px;background:#1c1e1e;"></div>
<svg class="a" style="left:1047px;top:514px;" width="9" height="9" viewBox="0 0 9 9"><path d="M1.5 1.5 L7.5 7.5 M7.5 1.5 L1.5 7.5" stroke="#8e8e8e" stroke-width="1.8"/></svg>
<div class="a" style="left:816px;top:545px;width:275px;height:1px;background:#050505;"></div>
<div id="t8672a869" class="t" style="left:65.2px;top:530px;font-size:12px;font-weight:700;color:#ffffff;letter-spacing:-0.091px;">Presentation</div>
<div class="a" style="left:816px;top:563px;width:275px;height:1px;background:#050505;"></div>
<div id="tf662dd55" class="t" style="left:84px;top:548px;font-size:12px;font-weight:400;color:#f0f0f0;letter-spacing:-0.163px;">Show alarm images</div>
<div class="a" style="left:861px;top:548px;width:1px;height:13px;background:#ffffff;"></div>
<div class="a" style="left:862px;top:548px;width:12px;height:13px;background:#1c1e1e;"></div>
<svg class="a" style="left:864px;top:550px;" width="9" height="9" viewBox="0 0 9 9"><path d="M1.5 1.5 L7.5 7.5 M7.5 1.5 L1.5 7.5" stroke="#8e8e8e" stroke-width="1.8"/></svg>
<div class="a" style="left:959px;top:548px;width:1px;height:13px;background:#ffffff;"></div>
<div class="a" style="left:960px;top:548px;width:12px;height:13px;background:#1c1e1e;"></div>
<svg class="a" style="left:962px;top:550px;" width="9" height="9" viewBox="0 0 9 9"><path d="M1.5 1.5 L7.5 7.5 M7.5 1.5 L1.5 7.5" stroke="#8e8e8e" stroke-width="1.8"/></svg>
<div class="a" style="left:1044px;top:548px;width:1px;height:13px;background:#ffffff;"></div>
<div class="a" style="left:1045px;top:548px;width:12px;height:13px;background:#1c1e1e;"></div>
<div class="a" style="left:816px;top:581px;width:275px;height:1px;background:#050505;"></div>
<div id="t779b91fa" class="t" style="left:84px;top:566px;font-size:12px;font-weight:400;color:#f0f0f0;letter-spacing:0.084px;">Bring to front on new alarm</div>
<div class="a" style="left:861px;top:566px;width:1px;height:13px;background:#ffffff;"></div>
<div class="a" style="left:862px;top:566px;width:12px;height:13px;background:#1c1e1e;"></div>
<svg class="a" style="left:864px;top:568px;" width="9" height="9" viewBox="0 0 9 9"><path d="M1.5 1.5 L7.5 7.5 M7.5 1.5 L1.5 7.5" stroke="#8e8e8e" stroke-width="1.8"/></svg>
<div class="a" style="left:959px;top:566px;width:1px;height:13px;background:#ffffff;"></div>
<div class="a" style="left:960px;top:566px;width:12px;height:13px;background:#1c1e1e;"></div>
<svg class="a" style="left:962px;top:568px;" width="9" height="9" viewBox="0 0 9 9"><path d="M1.5 1.5 L7.5 7.5 M7.5 1.5 L1.5 7.5" stroke="#8e8e8e" stroke-width="1.8"/></svg>
<div class="a" style="left:1044px;top:566px;width:1px;height:13px;background:#ffffff;"></div>
<div class="a" style="left:1045px;top:566px;width:12px;height:13px;background:#1c1e1e;"></div>
<svg class="a" style="left:1047px;top:568px;" width="9" height="9" viewBox="0 0 9 9"><path d="M1.5 1.5 L7.5 7.5 M7.5 1.5 L1.5 7.5" stroke="#8e8e8e" stroke-width="1.8"/></svg>
<div class="a" style="left:816px;top:599px;width:275px;height:1px;background:#050505;"></div>
<div id="tbca87e15" class="t" style="left:84px;top:584px;font-size:12px;font-weight:400;color:#f0f0f0;letter-spacing:-0.050px;">Play sound on receiving new alarm</div>
<div class="a" style="left:861px;top:584px;width:1px;height:13px;background:#ffffff;"></div>
<div class="a" style="left:862px;top:584px;width:12px;height:13px;background:#1c1e1e;"></div>
<svg class="a" style="left:864px;top:586px;" width="9" height="9" viewBox="0 0 9 9"><path d="M1.5 1.5 L7.5 7.5 M7.5 1.5 L1.5 7.5" stroke="#8e8e8e" stroke-width="1.8"/></svg>
<div class="a" style="left:959px;top:584px;width:1px;height:13px;background:#ffffff;"></div>
<div class="a" style="left:960px;top:584px;width:12px;height:13px;background:#1c1e1e;"></div>
<svg class="a" style="left:962px;top:586px;" width="9" height="9" viewBox="0 0 9 9"><path d="M1.5 1.5 L7.5 7.5 M7.5 1.5 L1.5 7.5" stroke="#8e8e8e" stroke-width="1.8"/></svg>
<div class="a" style="left:1044px;top:584px;width:1px;height:13px;background:#ffffff;"></div>
<div class="a" style="left:1045px;top:584px;width:12px;height:13px;background:#1c1e1e;"></div>
<div class="a" style="left:816px;top:617px;width:275px;height:1px;background:#050505;"></div>
<div id="ta1919ad2" class="t" style="left:84px;top:602px;font-size:12px;font-weight:400;color:#f0f0f0;letter-spacing:-0.115px;">Clear viewer if alarm is removed</div>
<div class="a" style="left:861px;top:602px;width:1px;height:13px;background:#ffffff;"></div>
<div class="a" style="left:862px;top:602px;width:12px;height:13px;background:#1c1e1e;"></div>
<div class="a" style="left:959px;top:602px;width:1px;height:13px;background:#ffffff;"></div>
<div class="a" style="left:960px;top:602px;width:12px;height:13px;background:#1c1e1e;"></div>
<div class="a" style="left:1044px;top:602px;width:1px;height:13px;background:#ffffff;"></div>
<div class="a" style="left:1045px;top:602px;width:12px;height:13px;background:#1c1e1e;"></div>
<div class="a" style="left:816px;top:635px;width:275px;height:1px;background:#050505;"></div>
<div id="t64a44875" class="t" style="left:84px;top:620px;font-size:12px;font-weight:400;color:#f0f0f0;letter-spacing:-0.223px;">Restore prealarm state</div>
<div class="a" style="left:861px;top:620px;width:1px;height:13px;background:#ffffff;"></div>
<div class="a" style="left:862px;top:620px;width:12px;height:13px;background:#1c1e1e;"></div>
<svg class="a" style="left:864px;top:622px;" width="9" height="9" viewBox="0 0 9 9"><path d="M1.5 1.5 L7.5 7.5 M7.5 1.5 L1.5 7.5" stroke="#8e8e8e" stroke-width="1.8"/></svg>
<div class="a" style="left:959px;top:620px;width:1px;height:13px;background:#ffffff;"></div>
<div class="a" style="left:960px;top:620px;width:12px;height:13px;background:#1c1e1e;"></div>
<svg class="a" style="left:962px;top:622px;" width="9" height="9" viewBox="0 0 9 9"><path d="M1.5 1.5 L7.5 7.5 M7.5 1.5 L1.5 7.5" stroke="#8e8e8e" stroke-width="1.8"/></svg>
<div class="a" style="left:1044px;top:620px;width:1px;height:13px;background:#ffffff;"></div>
<div class="a" style="left:1045px;top:620px;width:12px;height:13px;background:#1c1e1e;"></div>
<svg class="a" style="left:1047px;top:622px;" width="9" height="9" viewBox="0 0 9 9"><path d="M1.5 1.5 L7.5 7.5 M7.5 1.5 L1.5 7.5" stroke="#8e8e8e" stroke-width="1.8"/></svg>
<div id="td2ba65ca" class="t" style="left:66.2px;top:638px;font-size:12px;font-weight:700;color:#ffffff;letter-spacing:-0.087px;">Queue management</div>
<div class="a" style="left:920px;top:348px;width:1px;height:303px;background:#050505;"></div>
<div class="a" style="left:1010px;top:348px;width:1px;height:303px;background:#050505;"></div>
<div class="a" style="left:1091px;top:348px;width:17px;height:17px;background:#050505;"></div>
<svg class="a" style="left:1096px;top:354px;" width="8" height="5" viewBox="0 0 8 5"><path d="M0 5 L4 0 L8 5 Z" fill="#9a9a9a"/></svg>
<div class="a" style="left:1091px;top:365px;width:17px;height:227px;background:#404447;"></div>
<div class="a" style="left:1091px;top:592px;width:17px;height:59px;background:#050505;"></div>
<svg class="a" style="left:1096px;top:641px;" width="8" height="5" viewBox="0 0 8 5"><path d="M0 0 L8 0 L4 5 Z" fill="#9a9a9a"/></svg>
<div class="a" style="left:57px;top:668px;width:13px;height:13px;background:#1a1a1a;border:1px solid #3e3e3e;"></div>
<div id="t21d96409" class="t" style="left:74.4px;top:668px;font-size:12px;font-weight:400;color:#d8d8d8;letter-spacing:-0.003px;">Alarm push function (APF)</div>
<div id="ta0d9b3e2" class="t" style="left:109px;top:698px;font-size:12px;font-weight:400;color:#8a8a8a;letter-spacing:-0.143px;">Password</div>
<div class="a" style="left:170px;top:695px;width:113px;height:21px;background:#1a1a1a;border:2px solid #363636;"></div>
<div id="t98422523" class="t" style="left:349.3px;top:698px;font-size:12px;font-weight:400;color:#8a8a8a;letter-spacing:-0.066px;">Port</div>
<div class="a" style="left:379px;top:695px;width:110px;height:22px;background:#1a1a1a;border:2px solid #363636;"></div>
<div id="t97e37f09" class="t" style="left:382.6px;top:699px;font-size:12px;font-weight:400;color:#9a9a9a;letter-spacing:-0.700px;">13020</div>
<div class="a" style="left:57px;top:730px;width:13px;height:13px;background:#1a1a1a;border:1px solid #3e3e3e;"></div>
<div id="t8044f59a" class="t" style="left:73px;top:730px;font-size:12px;font-weight:400;color:#d8d8d8;letter-spacing:0.045px;">Play special sound for alarm notification</div>
<div class="a" style="left:77px;top:756px;width:909px;height:23px;background:#030303;border:2px solid #3a3a3a;"></div>
<div class="a" style="left:992px;top:757px;width:25px;height:23px;border:1px solid #3e3e3e;background:linear-gradient(#141414,#050505);"></div>
<div id="t2c936764" class="t" style="left:1000px;top:762px;font-size:12px;font-weight:400;color:#cfcfcf;font-size:11px;">...</div>
<div class="a" style="left:1021px;top:758px;width:75px;height:23px;border:1px solid #2a2a2a;background:linear-gradient(#141414,#050505);"></div>
<div id="t022a9497" class="t" style="left:1054px;top:763px;font-size:12px;font-weight:400;color:#8a8a8a;font-size:11px;">&gt;</div>
<div class="a" style="left:42px;top:814px;width:5px;height:1px;background:#3c3c3c;"></div>
<div class="a" style="left:213px;top:814px;width:911px;height:1px;background:#3c3c3c;"></div>
<div class="a" style="left:42px;top:814px;width:1px;height:37px;background:#3c3c3c;"></div>
<div class="a" style="left:1123px;top:814px;width:1px;height:37px;background:#3c3c3c;"></div>
<div class="a" style="left:42px;top:850px;width:1082px;height:1px;background:#3c3c3c;"></div>
<div id="t738fc188" class="t" style="left:47px;top:805px;font-size:12px;font-weight:400;color:#d8d8d8;letter-spacing:-0.143px;">Play special sound on LiveMOS</div>
<div class="a" style="left:77px;top:822px;width:909px;height:23px;background:#030303;border:2px solid #3a3a3a;"></div>
<div class="a" style="left:992px;top:822px;width:25px;height:23px;border:1px solid #3e3e3e;background:linear-gradient(#141414,#050505);"></div>
<div id="t32cba30a" class="t" style="left:1000px;top:827px;font-size:12px;font-weight:400;color:#e0e0e0;font-size:11px;">...</div>
<div class="a" style="left:1021px;top:822px;width:75px;height:23px;border:1px solid #3e3e3e;background:linear-gradient(#141414,#050505);"></div>
<div id="t71d6d863" class="t" style="left:1054px;top:827px;font-size:12px;font-weight:400;color:#e0e0e0;font-size:11px;">&gt;</div>
<div class="a" style="left:1001px;top:893px;width:75px;height:25px;border:1px solid #3e3e3e;background:linear-gradient(#111,#050505);"></div>
<div id="t40800688" class="t" style="left:1029.4px;top:899px;font-size:12px;font-weight:400;color:#c8c8c8;letter-spacing:-0.600px;">OK</div>
<div class="a" style="left:1097px;top:893px;width:75px;height:25px;border:1px solid #3e3e3e;background:linear-gradient(#111,#050505);"></div>
<div id="tf5467877" class="t" style="left:1116px;top:899px;font-size:12px;font-weight:400;color:#ffffff;letter-spacing:-0.160px;">Cancel</div>
</body></html>
